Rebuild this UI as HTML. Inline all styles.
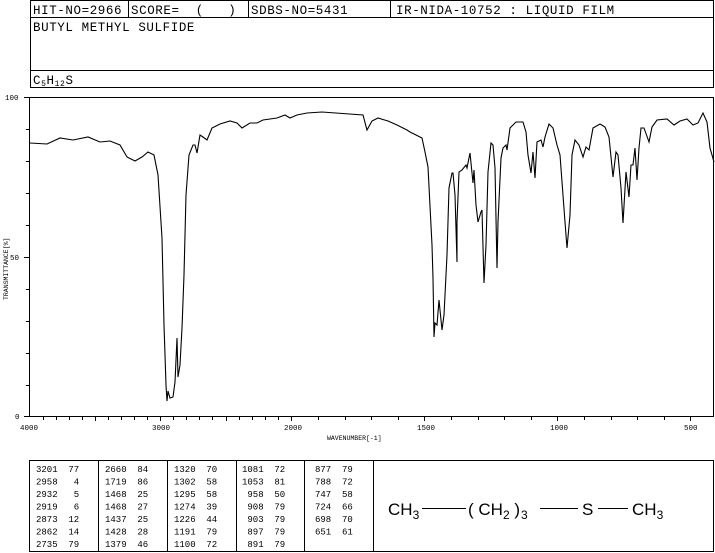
<!DOCTYPE html>
<html><head><meta charset="utf-8"><style>
html,body{margin:0;padding:0;background:#fff;}
svg{display:block;}
text{font-family:"Liberation Mono",monospace;fill:#000;white-space:pre;}
</style></head><body>
<svg width="715" height="553" viewBox="0 0 715 553" xmlns="http://www.w3.org/2000/svg">
<g fill="none" stroke="#000" stroke-width="1">
<rect x="30.5" y="0.5" width="683" height="87"/>
<line x1="30" y1="17.5" x2="714" y2="17.5"/>
<line x1="30" y1="70.5" x2="714" y2="70.5"/>
<line x1="128.5" y1="0" x2="128.5" y2="17"/>
<line x1="248.5" y1="0" x2="248.5" y2="17"/>
<line x1="390.5" y1="0" x2="390.5" y2="17"/>
<rect x="29.5" y="97.5" width="684" height="319"/>
<line x1="24" y1="97.5" x2="30" y2="97.5"/>
<line x1="24" y1="257.5" x2="30" y2="257.5"/>
<line x1="24" y1="416.5" x2="30" y2="416.5"/>
<path d="M26 129.5h4M26 161.5h4M26 193.5h4M26 225.5h4M26 289.5h4M26 321.5h4M26 353.5h4M26 385.5h4"/>
<path d="M43.5 417v3M56.5 417v3M69.5 417v3M82.5 417v3M95.5 417v4M108.5 417v3M121.5 417v3M134.5 417v3M147.5 417v3M160.5 417v4M173.5 417v3M186.5 417v3M199.5 417v3M212.5 417v3M226.5 417v4M239.5 417v3M252.5 417v3M265.5 417v3M278.5 417v3M291.5 417v4M318.5 417v3M345.5 417v3M371.5 417v3M398.5 417v3M424.5 417v4M451.5 417v3M478.5 417v3M504.5 417v3M531.5 417v3M557.5 417v4M584.5 417v3M611.5 417v3M637.5 417v3M664.5 417v3M690.5 417v4"/>
<polyline stroke-width="1.1" points="30,143 47,144 60,138 73,140 88,137 100,142 110,141 120,145 127,157 135,161 142,157 148,152 154,155 158,175 162,238 164,325 166,385 167,401 168,391 170,398 173,397 175,382 177,338 178,377 180,365 182,328 184,275 186,195 189,155 193,145 195,145 197,153 200,135 203,137 207,140 212,128 220,124 230,121 237,123 242,128 250,123 257,123 263,120 277,118 285,115 290,118 297,115 307,113 322,112 363,115 367,130 372,121 378,118 388,121 397,125 407,130 410,132 422,138 425,152 428,167 432,245 433,278 434,337 435,323 437,325 439,300 442,330 444,315 447,255 449,188 452,173 453,173 455,195 457,262 457,222 459,172 462,170 466,165 467,168 470,153 473,183 474,170 476,205 478,222 481,212 482,210 484,283 486,245 488,172 491,143 493,145 495,168 497,268 498,222 501,158 503,148 506,145 507,150 510,128 516,122 523,122 526,132 528,155 531,173 533,152 535,178 537,142 541,140 543,147 545,137 549,124 553,128 557,145 560,155 565,222 567,248 570,215 572,155 575,140 579,145 583,157 586,147 589,150 593,128 600,124 605,127 609,137 613,177 616,152 618,155 621,188 623,223 626,172 629,197 631,165 633,165 635,148 637,180 639,148 641,128 644,128 649,142 652,127 657,120 667,119 674,125 680,121 687,119 693,125 698,123 703,113 707,122 710,148 714,162"/>
<rect x="29.5" y="460.5" width="684" height="91"/>
<path d="M98.5 460v92M167.5 460v92M236.5 460v92M304.5 460v92M373.5 460v92"/>
</g>
<g font-size="12.5" letter-spacing="0.6">
<text x="33" y="14">HIT-NO=2966</text>
<text x="131" y="14">SCORE=  (   )</text>
<text x="251" y="14">SDBS-NO=5431</text>
<text x="396" y="14">IR-NIDA-10752 : LIQUID FILM</text>
<text x="33" y="31">BUTYL METHYL SULFIDE</text>
<text x="33" y="84">C<tspan font-size="8" dy="2">5</tspan><tspan dy="-2">H</tspan><tspan font-size="8" dy="2">12</tspan><tspan dy="-2">S</tspan></text>
</g>
<g font-size="7.5">
<text x="5" y="100">100</text>
<text x="10" y="260">50</text>
<text x="15" y="419">0</text>
<text x="20" y="430">4000</text>
<text x="152" y="430">3000</text>
<text x="284" y="430">2000</text>
<text x="417" y="430">1500</text>
<text x="550" y="430">1000</text>
<text x="684" y="430">500</text>
<text x="327" y="440" font-size="6.5">WAVENUMBER[-1]</text>
<text transform="translate(8,300) rotate(-90)" font-size="6.5">TRANSMITTANCE[%]</text>
</g>
<g font-size="9">
<text x="36" y="472">3201  77</text><text x="36" y="484.5">2958   4</text><text x="36" y="497">2932   5</text><text x="36" y="509.5">2919   6</text><text x="36" y="522">2873  12</text><text x="36" y="534.5">2862  14</text><text x="36" y="547">2735  79</text>
<text x="105" y="472">2660  84</text><text x="105" y="484.5">1719  86</text><text x="105" y="497">1468  25</text><text x="105" y="509.5">1468  27</text><text x="105" y="522">1437  25</text><text x="105" y="534.5">1428  28</text><text x="105" y="547">1379  46</text>
<text x="174" y="472">1320  70</text><text x="174" y="484.5">1302  58</text><text x="174" y="497">1295  58</text><text x="174" y="509.5">1274  39</text><text x="174" y="522">1226  44</text><text x="174" y="534.5">1191  79</text><text x="174" y="547">1100  72</text>
<text x="242" y="472">1081  72</text><text x="242" y="484.5">1053  81</text><text x="242" y="497"> 958  50</text><text x="242" y="509.5"> 908  79</text><text x="242" y="522"> 903  79</text><text x="242" y="534.5"> 897  79</text><text x="242" y="547"> 891  79</text>
<text x="315" y="472">877  79</text><text x="315" y="484.5">788  72</text><text x="315" y="497">747  58</text><text x="315" y="509.5">724  66</text><text x="315" y="522">698  70</text><text x="315" y="534.5">651  61</text>
</g>
<g font-size="17">
<text x="388" y="515" style="font-family:'Liberation Sans',sans-serif">CH<tspan font-size="12" dy="4">3</tspan></text>
<text x="468" y="515" style="font-family:'Liberation Sans',sans-serif">( CH<tspan font-size="12" dy="4">2</tspan><tspan dy="-4"> )</tspan></text>
<text x="521" y="519" font-size="12" style="font-family:'Liberation Sans',sans-serif">3</text>
<text x="582" y="515" style="font-family:'Liberation Sans',sans-serif">S</text>
<text x="632" y="515" style="font-family:'Liberation Sans',sans-serif">CH<tspan font-size="12" dy="4">3</tspan></text>
</g>
<g stroke="#000" stroke-width="1">
<line x1="422" y1="508.5" x2="466" y2="508.5"/>
<line x1="540" y1="508.5" x2="578" y2="508.5"/>
<line x1="598" y1="508.5" x2="628" y2="508.5"/>
</g>
</svg>
</body></html>
